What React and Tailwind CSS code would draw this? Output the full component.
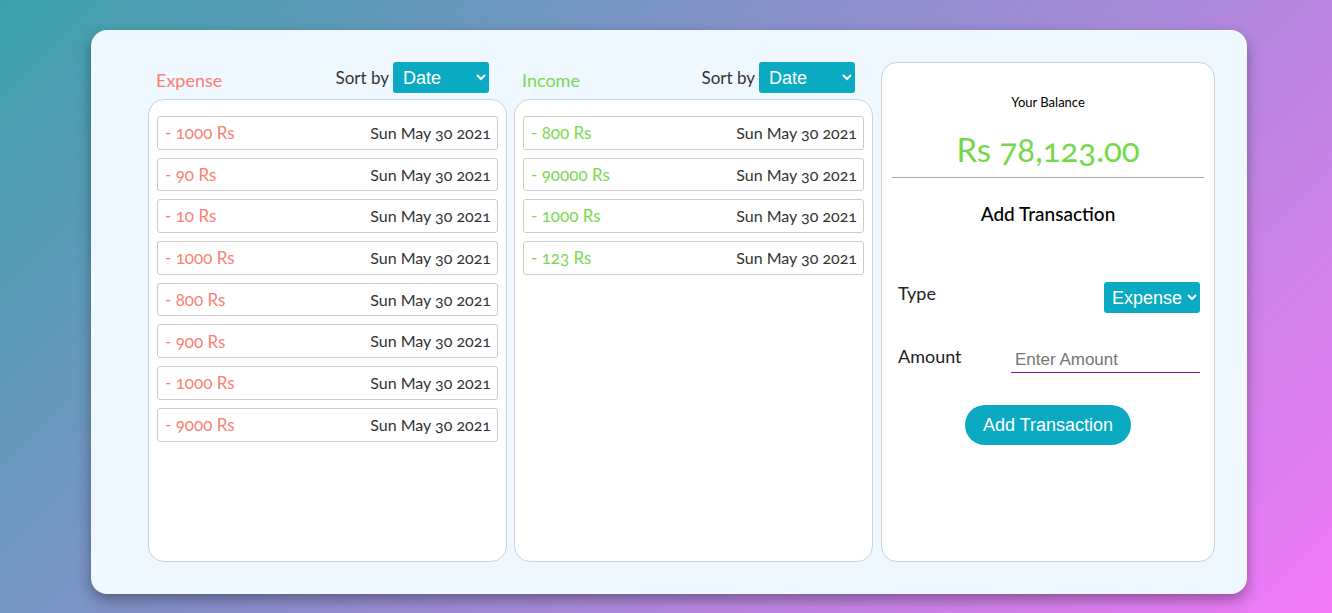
import React, { useState } from 'react';

const expenses = [
  { amount: 1000, date: 'Sun May 30 2021' },
  { amount: 90, date: 'Sun May 30 2021' },
  { amount: 10, date: 'Sun May 30 2021' },
  { amount: 1000, date: 'Sun May 30 2021' },
  { amount: 800, date: 'Sun May 30 2021' },
  { amount: 900, date: 'Sun May 30 2021' },
  { amount: 1000, date: 'Sun May 30 2021' },
  { amount: 9000, date: 'Sun May 30 2021' },
];

const incomes = [
  { amount: 800, date: 'Sun May 30 2021' },
  { amount: 90000, date: 'Sun May 30 2021' },
  { amount: 1000, date: 'Sun May 30 2021' },
  { amount: 123, date: 'Sun May 30 2021' },
];

const SortSelect = () => (
  <select
    defaultValue="date"
    className="h-[31px] w-[96px] rounded-[3px] bg-[#0aaac2] pl-[6px] pr-1 text-[18px] text-white outline-none font-['Liberation_Sans',Arial,sans-serif]"
  >
    <option value="date">Date</option>
    <option value="amount">Amount</option>
  </select>
);

const TransactionColumn = ({ title, titleColor, items }) => (
  <div className="flex w-[359px] flex-col">
    <div className="flex h-[37px] items-start justify-between pr-[18px]">
      <span className={`mt-[5px] pl-2 text-[18px] ${titleColor}`}>{title}</span>
      <div className="flex items-center gap-[4px]">
        <span className="text-[17px] text-[#333]">Sort by</span>
        <SortSelect />
      </div>
    </div>
    <div className="flex flex-1 flex-col gap-2 rounded-[16px] border border-[#cfd3d8] bg-white px-[8px] pt-[16px]">
      {items.map((item, i) => (
        <div
          key={i}
          className="flex h-[33.7px] shrink-0 items-center justify-between rounded-[3px] border border-[#cccccc] pl-[7px] pr-[6px]"
        >
          <span className={`text-[17px] ${titleColor}`}>- {item.amount} Rs</span>
          <span className="text-[16px] text-[#333]">{item.date}</span>
        </div>
      ))}
    </div>
  </div>
);

const App = () => {
  const [type, setType] = useState('expense');
  const [amount, setAmount] = useState('');

  return (
    <div className="min-h-[613px] w-full bg-linear-135/srgb from-[#3ca2aa] to-[#f279fa] pl-[91px] pt-[30px] font-['Lato',sans-serif] oldstyle-nums">
      <div className="flex h-[564px] w-[1156px] gap-[7px] rounded-[16px] bg-[#eff7ff] py-[32px] pl-[57px] pr-[32px] shadow-[0_6px_14px_rgba(0,0,0,0.35)]">
        <TransactionColumn title="Expense" titleColor="text-[#fa8072]" items={expenses} />
        <TransactionColumn title="Income" titleColor="text-[#7ad94f]" items={incomes} />
        <div className="ml-[1px] flex w-[334px] flex-col rounded-[16px] border border-[#cfd3d8] bg-white px-[10px]">
          <p className="mt-[30px] text-center text-[13px] text-black">Your Balance</p>
          <p className="mt-[16px] text-center text-[33px] leading-[40px] text-[#74d94a]">Rs 78,123.00</p>
          <hr className="mt-[8px] border-t border-[#aaaaaa]" />
          <p className="mt-[22px] text-center text-[19px] font-medium text-black">Add Transaction</p>
          <div className="mt-[54px] flex items-start justify-between pl-[6px] pr-[4px]">
            <span className="mt-[-2px] text-[18px] text-[#222]">Type</span>
            <select
              value={type}
              onChange={(e) => setType(e.target.value)}
              className="h-[31px] w-[96px] rounded-[3px] bg-[#0aaac2] pl-[4px] text-[18px] text-white outline-none font-['Liberation_Sans',Arial,sans-serif]"
            >
              <option value="expense">Expense</option>
              <option value="income">Income</option>
            </select>
          </div>
          <div className="mt-[28px] flex items-start justify-between pl-[6px] pr-[4px]">
            <span className="mt-[2px] text-[18px] text-[#222]">Amount</span>
            <input
              value={amount}
              onChange={(e) => setAmount(e.target.value)}
              placeholder="Enter Amount"
              className="h-[32px] w-[189px] border-b border-[#7a1a8a] bg-transparent pl-[4px] pt-[6px] text-[17px] outline-none placeholder:text-[#757575] font-['Liberation_Sans',Arial,sans-serif]"
            />
          </div>
          <div className="mt-[32px] flex justify-center">
            <button className="h-[40px] w-[166px] rounded-[20px] bg-[#0aaac2] text-[18px] text-white font-['Liberation_Sans',Arial,sans-serif]">
              Add Transaction
            </button>
          </div>
        </div>
      </div>
    </div>
  );
};

export default App;
